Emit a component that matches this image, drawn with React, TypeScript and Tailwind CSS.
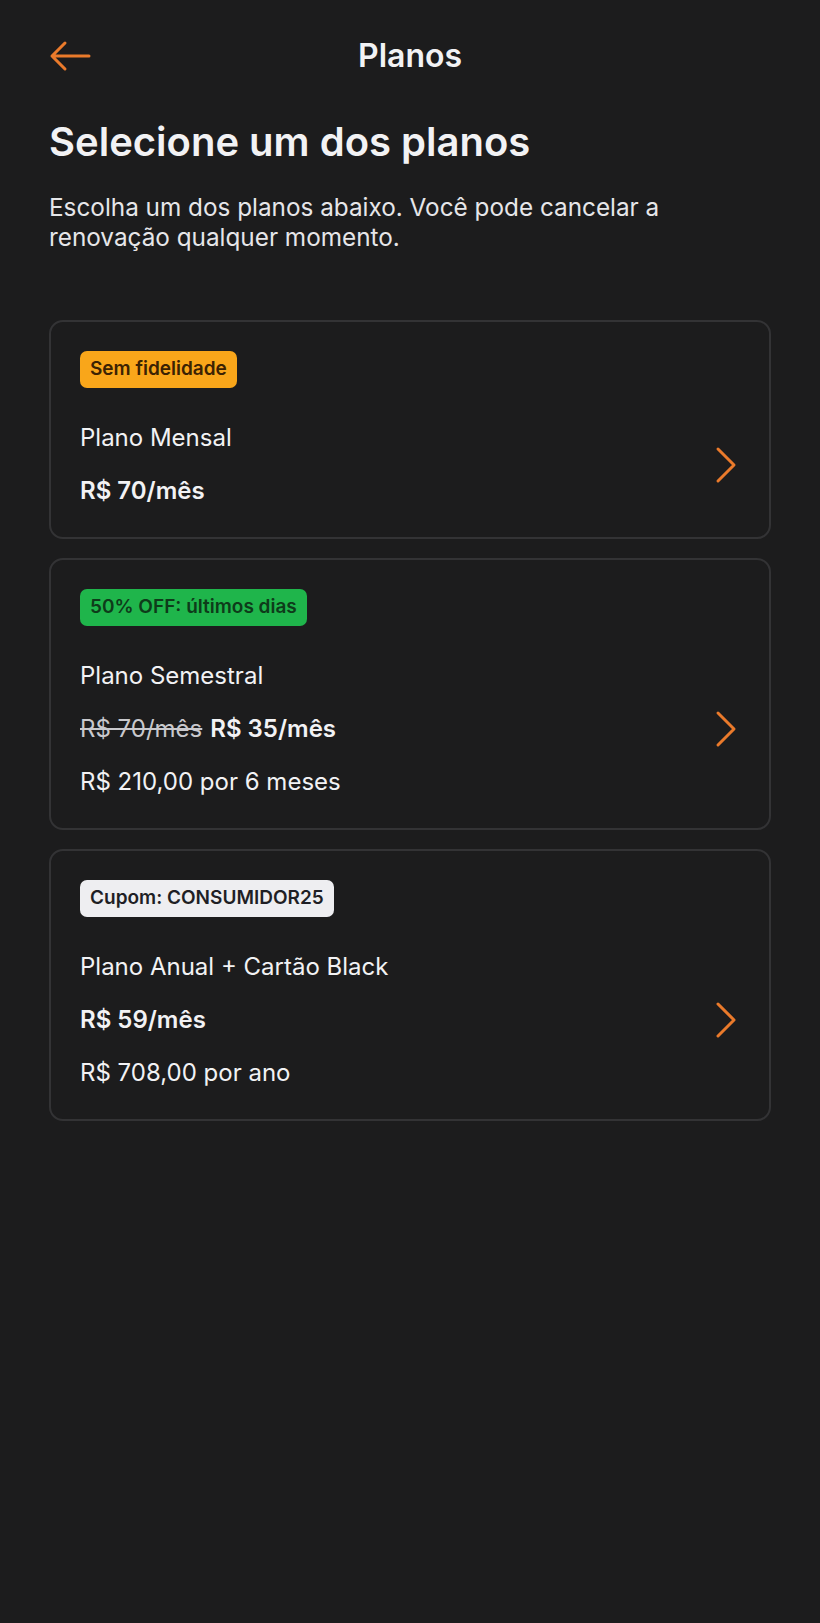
const plans = [
  {
    badge: "Sem fidelidade",
    badgeClass: "bg-[#f9a61a] text-[#3b2203]",
    name: "Plano Mensal",
    oldPrice: "",
    price: "R$ 70/mês",
    total: "",
  },
  {
    badge: "50% OFF: últimos dias",
    badgeClass: "bg-[#1fb54b] text-[#0e3b1a]",
    name: "Plano Semestral",
    oldPrice: "R$ 70/mês",
    price: "R$ 35/mês",
    total: "R$ 210,00 por 6 meses",
  },
  {
    badge: "Cupom: CONSUMIDOR25",
    badgeClass: "bg-[#eeeef1] text-[#1f1f25]",
    name: "Plano Anual + Cartão Black",
    oldPrice: "",
    price: "R$ 59/mês",
    total: "R$ 708,00 por ano",
  },
];

const BackArrow = () => (
  <svg width="42" height="32" viewBox="0 0 42 32" fill="none">
    <path
      d="M40 16H3M16 3L3 16L16 29"
      stroke="#ea7a2b"
      strokeWidth="3"
      strokeLinecap="round"
      strokeLinejoin="round"
    />
  </svg>
);

const Chevron = () => (
  <svg width="22" height="38" viewBox="0 0 22 38" fill="none">
    <path
      d="M3 3L19 19L3 35"
      stroke="#ea7a2b"
      strokeWidth="3"
      strokeLinecap="round"
      strokeLinejoin="round"
    />
  </svg>
);

const PlanCard = ({ plan }: { plan: (typeof plans)[number] }) => {
  return (
    <div className="rounded-[14px] border-2 border-[#333335] px-[29px] pt-[29px] pb-[31px]">
      <span
        className={`inline-flex h-[37px] items-center rounded-[7px] px-[10px] text-[19px] font-semibold ${plan.badgeClass}`}
      >
        {plan.badge}
      </span>
      <div className="mt-[35px] flex items-center justify-between">
        <div className="flex flex-col gap-[23px] text-[24px] leading-[30px] text-[#f2f2f4]">
          <p>{plan.name}</p>
          <p>
            {plan.oldPrice && (
              <span className="mr-[8px] text-[#c9c9cd] line-through">{plan.oldPrice}</span>
            )}
            <span className="font-semibold">{plan.price}</span>
          </p>
          {plan.total && <p>{plan.total}</p>}
        </div>
        <div className="mr-[3px]">
          <Chevron />
        </div>
      </div>
    </div>
  );
};

const App = () => {
  return (
    <main
      className="min-h-[1623px] bg-[#1c1c1d] px-[49px] text-[#f2f2f4]"
      style={{ fontFamily: "Inter, 'Noto Sans', sans-serif" }}
    >
      <header className="flex h-[112px] items-center">
        <div className="w-[60px]">
          <BackArrow />
        </div>
        <h1 className="flex-1 text-center text-[32px] font-semibold">Planos</h1>
        <div className="w-[60px]" />
      </header>

      <h2 className="mt-[8px] text-[40px] leading-[44px] font-semibold">
        Selecione um dos planos
      </h2>
      <p className="mt-[28px] text-[24.3px] leading-[30px] text-[#e6e6e9]">
        Escolha um dos planos abaixo. Você pode cancelar a
        <br />
        renovação qualquer momento.
      </p>

      <div className="mt-[68px] flex flex-col gap-[19px]">
        {plans.map((plan) => (
          <PlanCard key={plan.name} plan={plan} />
        ))}
      </div>
    </main>
  );
};

export default App;
